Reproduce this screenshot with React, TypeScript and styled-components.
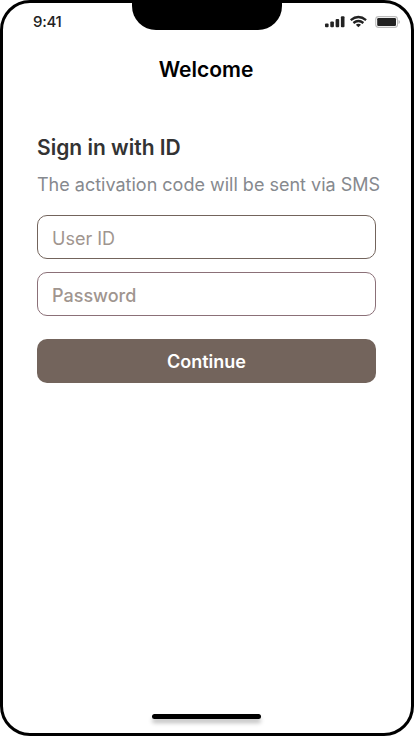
import React from 'react';
import styled, { createGlobalStyle } from 'styled-components';

const GlobalStyle = createGlobalStyle`
  *, *::before, *::after { box-sizing: border-box; }
  body { margin: 0; background: #fff; font-family: Inter, 'Liberation Sans', sans-serif; }
`;

const Phone = styled.div`
  display: flex;
  flex-direction: column;
  width: 414px;
  height: 736px;
  border: 3px solid #000;
  border-radius: 30px;
  background: #fff;
  overflow: hidden;
`;

const StatusBar = styled.header`
  display: grid;
  grid-template-columns: 129px 150px 1fr;
  height: 27px;
`;

const Clock = styled.time`
  padding: 9px 0 0 30px;
  font-size: 15px;
  line-height: 20px;
  font-weight: 500;
  letter-spacing: -0.3px;
  color: #222;
`;

const Notch = styled.div`
  height: 27px;
  background: #000;
  border-radius: 0 0 24px 24px;
`;

const StatusIcons = styled.div`
  display: flex;
  padding: 10px 0 0 40px;
`;

const Title = styled.h1`
  margin: 26px 0 0;
  padding-right: 2px;
  text-align: center;
  font-size: 21px;
  line-height: 28px;
  font-weight: 600;
  color: #000;
`;

const Form = styled.form`
  display: flex;
  flex-direction: column;
  width: 339px;
  margin: 50px 0 0 34px;
`;

const Heading = styled.h2`
  margin: 0;
  font-size: 21px;
  line-height: 28px;
  font-weight: 600;
  color: #333;
`;

const Hint = styled.p`
  margin: 10px 0 17px;
  font-size: 18px;
  line-height: 26px;
  font-weight: 400;
  color: #86898e;
  white-space: nowrap;
`;

const Field = styled.input<{ $border: string; $weight: number }>`
  width: 100%;
  height: 44px;
  margin: 0 0 13px;
  padding: 3px 14px 0;
  border: 1px solid ${(p) => p.$border};
  border-radius: 10px;
  background: #fff;
  font-family: inherit;
  font-size: 18px;
  font-weight: ${(p) => p.$weight};
  outline: none;
  &::placeholder { color: #a0958f; opacity: 1; }
`;

const Submit = styled.button`
  height: 44px;
  margin-top: 10px;
  padding: 1px 0 0;
  border: 0;
  border-radius: 10px;
  background: #73645c;
  color: #fff;
  font-family: inherit;
  font-size: 18px;
  font-weight: 600;
`;

const HomeIndicator = styled.div`
  width: 109px;
  height: 5px;
  margin: auto 0 14px 149px;
  border-radius: 3px;
  background: #000;
  box-shadow: 0 4px 4px rgba(0, 0, 0, 0.25);
`;

const StatusGlyphs = () => (
  <svg width="82" height="18" viewBox="322 13 82 18" fill="#222">
    <rect x="325" y="23.6" width="3.6" height="3.7" rx="1" />
    <rect x="330.3" y="21.4" width="3.6" height="5.9" rx="1" />
    <rect x="335.6" y="19" width="3.6" height="8.3" rx="1" />
    <rect x="340.9" y="16.3" width="3.6" height="11" rx="1" />
    <g fill="none" stroke="#222" strokeWidth="2.3">
      <path d="M350.7 20.1Q358.4 14 366.1 20.1" />
      <path d="M353.4 23Q358.4 18.9 363.4 23" />
    </g>
    <path d="M355.8 24.7Q358.4 22.8 361 24.7L358.4 27.3Z" />
    <rect x="375.7" y="16.6" width="21.8" height="10.8" rx="2.9" fill="none" stroke="#bcbcbc" strokeWidth="1.1" />
    <rect x="377.2" y="18" width="18.8" height="8" rx="1.3" />
    <path d="M398.5 20Q400 20.5 400 22T398.5 24Z" fill="#bcbcbc" />
  </svg>
);

export default function App() {
  return (
    <>
      <GlobalStyle />
      <Phone>
        <StatusBar>
          <Clock>9:41</Clock>
          <Notch />
          <StatusIcons><StatusGlyphs /></StatusIcons>
        </StatusBar>
        <Title>Welcome</Title>
        <Form onSubmit={(e) => e.preventDefault()}>
          <Heading>Sign in with ID</Heading>
          <Hint>The activation code will be sent via SMS</Hint>
          <Field placeholder="User ID" aria-label="User ID" $border="#73645c" $weight={400} />
          <Field type="password" placeholder="Password" aria-label="Password" $border="#8b7078" $weight={500} />
          <Submit type="submit">Continue</Submit>
        </Form>
        <HomeIndicator />
      </Phone>
    </>
  );
}
